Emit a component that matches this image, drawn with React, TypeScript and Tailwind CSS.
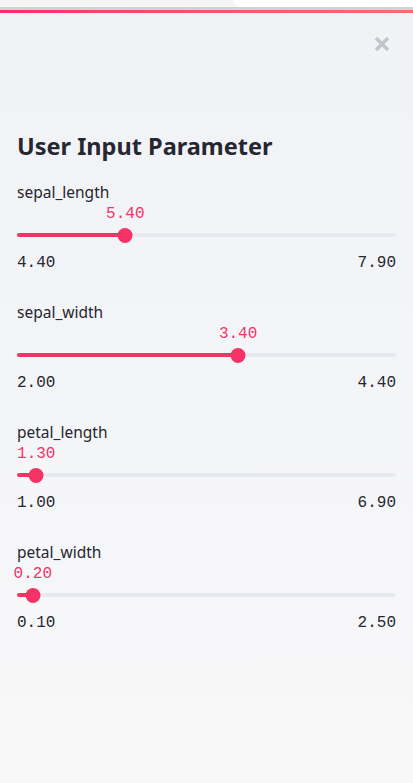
import React from "react";

type Param = { label: string; min: number; max: number; value: number };

const params: Param[] = [
  { label: "sepal_length", min: 4.4, max: 7.9, value: 5.4 },
  { label: "sepal_width", min: 2.0, max: 4.4, value: 3.4 },
  { label: "petal_length", min: 1.0, max: 6.9, value: 1.3 },
  { label: "petal_width", min: 0.1, max: 2.5, value: 0.2 },
];

const mono = { fontFamily: "'Liberation Mono', 'DejaVu Sans Mono', monospace" };

function Slider({ p }: { p: Param }) {
  const pct = ((p.value - p.min) / (p.max - p.min)) * 100;
  return (
    <div className="h-[120px]">
      <div className="h-[22px] text-[15.5px] leading-[22px] text-[#262730]">{p.label}</div>
      {/* value label over the thumb */}
      <div className="relative h-[22px]">
        <span
          className="absolute top-0 -translate-x-1/2 text-[16px] leading-[22px] text-[#f63366]"
          style={{ ...mono, left: `${pct}%` }}
        >
          {p.value.toFixed(2)}
        </span>
      </div>
      <div className="relative h-[22px]">
        <div className="absolute left-0 right-0 top-[8px] h-[4px] rounded-full bg-[#e6e9ef]" />
        <div
          className="absolute left-0 top-[8px] h-[4px] rounded-full bg-[#f63366]"
          style={{ width: `${pct}%` }}
        />
        <div
          className="absolute top-[2.5px] h-[15px] w-[15px] -translate-x-1/2 rounded-full bg-[#f63366]"
          style={{ left: `${pct}%` }}
        />
      </div>
      <div
        className="mt-[5px] flex justify-between text-[16px] leading-[22px] text-[#262730]"
        style={mono}
      >
        <span>{p.min.toFixed(2)}</span>
        <span>{p.max.toFixed(2)}</span>
      </div>
    </div>
  );
}

export default function App() {
  return (
    <div
      className="flex min-h-[783px] flex-col bg-gradient-to-b from-[#f0f2f6] to-[#f8f8f9]"
      style={{ fontFamily: "'Noto Sans', sans-serif" }}
    >
      {/* browser strip */}
      <div className="flex h-[7px] bg-[#f5f5f5]">
        <div className="flex-1" />
        <div className="w-[180px] rounded-bl-[8px] bg-white" />
      </div>
      <div className="h-[3px] bg-[#d2d2d4]" />
      <div className="h-[3px] bg-gradient-to-r from-[#ff2b68] to-[#ff6a6c]" />

      <div className="flex justify-end pr-[22px] pt-[22px]">
        <svg width="18" height="18" viewBox="0 0 18 18">
          <path d="M3 3 L15 15 M15 3 L3 15" stroke="#c4c5cc" strokeWidth="3.4" strokeLinecap="butt" />
        </svg>
      </div>

      <div className="px-[17px] pt-[76px]">
        <h2 className="text-[23.5px] font-bold leading-[34px] text-[#262730]">User Input Parameter</h2>
        <div className="mt-[18px]">
          {params.map((p) => (
            <Slider key={p.label} p={p} />
          ))}
        </div>
      </div>
    </div>
  );
}
